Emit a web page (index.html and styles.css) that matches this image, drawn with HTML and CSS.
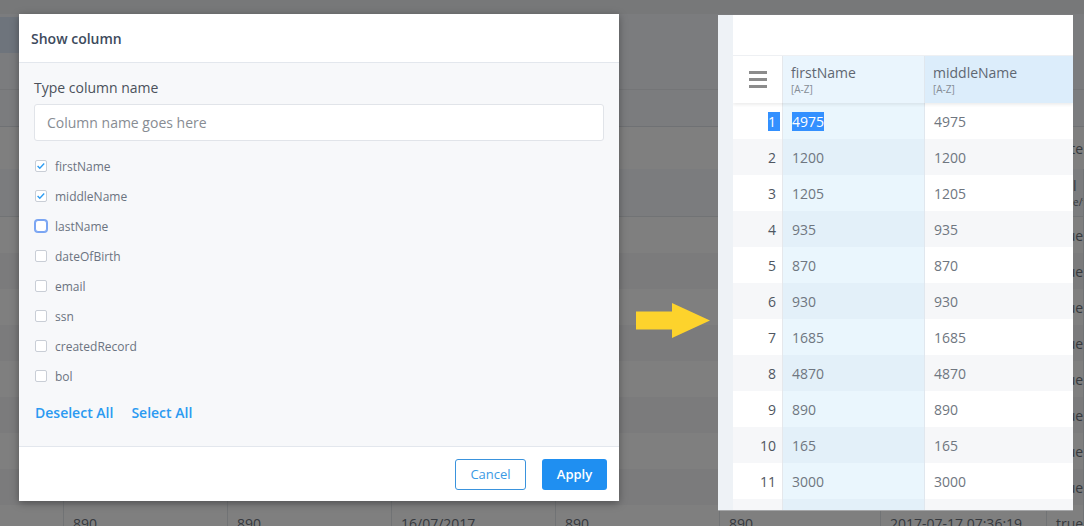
FILE: index.html
```html
<!DOCTYPE html>
<html lang="en">
<head>
    <meta charset="UTF-8">
    <meta name="viewport" content="width=device-width, initial-scale=1.0">
    <title>Show column</title>
    <link rel="stylesheet" href="styles.css">
</head>
<body>

    <!-- grid page behind the modal (only the parts that peek out carry text) -->
    <div class="app">
        <div class="app-top"></div>
        <div class="app-bar"><div class="app-tab"></div></div>
        <div class="app-pad"></div>
        <div class="app-pad app-pad-line"></div>
        <div class="app-row app-filter">
            <span></span><span></span><span></span><span></span><span></span><span></span><span></span><span>Filter</span>
        </div>
        <div class="app-row app-head">
            <span></span><span></span><span></span><span></span><span></span><span></span><span></span>
            <span>bol<small>[true/false]</small></span>
        </div>
        <div class="app-row"><span></span><span></span><span></span><span></span><span></span><span></span><span></span><span>true</span></div>
        <div class="app-row alt"><span></span><span></span><span></span><span></span><span></span><span></span><span></span><span>true</span></div>
        <div class="app-row"><span></span><span></span><span></span><span></span><span></span><span></span><span></span><span>true</span></div>
        <div class="app-row alt"><span></span><span></span><span></span><span></span><span></span><span></span><span></span><span>true</span></div>
        <div class="app-row"><span></span><span></span><span></span><span></span><span></span><span></span><span></span><span>true</span></div>
        <div class="app-row alt"><span></span><span></span><span></span><span></span><span></span><span></span><span></span><span>true</span></div>
        <div class="app-row"><span></span><span></span><span></span><span></span><span></span><span></span><span></span><span>true</span></div>
        <div class="app-row alt"><span></span><span></span><span></span><span></span><span></span><span></span><span></span><span>true</span></div>
        <div class="app-row"><span></span><span>890</span><span>890</span><span>16/07/2017</span><span>890</span><span>890</span><span>2017-07-17 07:36:19</span><span>true</span></div>
    </div>

    <div class="overlay"></div>

    <div class="stage">
        <div class="dialog">
            <div class="dialog-head">Show column</div>
            <div class="dialog-body">
                <div class="field-label">Type column name</div>
                <input class="field-input" type="text" placeholder="Column name goes here">

                <ul class="col-list">
                    <li><span class="box"><svg width="10" height="10" viewBox="0 0 10 10"><polyline points="1.6,5 3.8,7.2 8.2,2.6" /></svg></span>firstName</li>
                    <li><span class="box"><svg width="10" height="10" viewBox="0 0 10 10"><polyline points="1.6,5 3.8,7.2 8.2,2.6" /></svg></span>middleName</li>
                    <li><span class="box box-focus"></span>lastName</li>
                    <li><span class="box"></span>dateOfBirth</li>
                    <li><span class="box"></span>email</li>
                    <li><span class="box"></span>ssn</li>
                    <li><span class="box"></span>createdRecord</li>
                    <li><span class="box"></span>bol</li>
                </ul>

                <div class="bulk">
                    <a>Deselect All</a>
                    <a>Select All</a>
                </div>
            </div>
            <div class="dialog-foot">
                <button class="btn btn-cancel">Cancel</button>
                <button class="btn btn-apply">Apply</button>
            </div>
        </div>

        <svg class="arrow" width="74" height="35" viewBox="0 0 74 35">
            <polygon points="0,8.5 36,8.5 36,0 74,17.5 36,35 36,26.5 0,26.5" />
        </svg>

        <div class="shot">
            <div class="shot-side"></div>
            <div class="shot-main">
                <div class="shot-top"></div>
                <div class="grid-head">
                    <div class="c-num">
                        <svg width="18" height="17" viewBox="0 0 18 17">
                            <rect x="0" y="0" width="18" height="3" />
                            <rect x="0" y="7" width="18" height="3" />
                            <rect x="0" y="14" width="18" height="3" />
                        </svg>
                    </div>
                    <div class="c-first">firstName<small>[A-Z]</small></div>
                    <div class="c-mid">middleName<small>[A-Z]</small></div>
                </div>
                <div class="g-row"><div class="c-num"><span class="sel sel-num">1</span></div><div class="c-first"><span class="sel">4975</span></div><div class="c-mid">4975</div></div>
                <div class="g-row alt"><div class="c-num">2</div><div class="c-first">1200</div><div class="c-mid">1200</div></div>
                <div class="g-row"><div class="c-num">3</div><div class="c-first">1205</div><div class="c-mid">1205</div></div>
                <div class="g-row alt"><div class="c-num">4</div><div class="c-first">935</div><div class="c-mid">935</div></div>
                <div class="g-row"><div class="c-num">5</div><div class="c-first">870</div><div class="c-mid">870</div></div>
                <div class="g-row alt"><div class="c-num">6</div><div class="c-first">930</div><div class="c-mid">930</div></div>
                <div class="g-row"><div class="c-num">7</div><div class="c-first">1685</div><div class="c-mid">1685</div></div>
                <div class="g-row alt"><div class="c-num">8</div><div class="c-first">4870</div><div class="c-mid">4870</div></div>
                <div class="g-row"><div class="c-num">9</div><div class="c-first">890</div><div class="c-mid">890</div></div>
                <div class="g-row alt"><div class="c-num">10</div><div class="c-first">165</div><div class="c-mid">165</div></div>
                <div class="g-row"><div class="c-num">11</div><div class="c-first">3000</div><div class="c-mid">3000</div></div>
                <div class="g-row alt"><div class="c-num"></div><div class="c-first"></div><div class="c-mid"></div></div>
            </div>
        </div>
    </div>

</body>
</html>
```

FILE: styles.css
```css
* {
    box-sizing: border-box;
}
body {
    margin: 0;
    width: 1084px;
    height: 526px;
    overflow: hidden;
    position: relative;
    background: #fff;
    font-family: "Open Sans", "Noto Sans", Arial, sans-serif;
}

/* background page */
.app-top {
    height: 14px;
    background: #eef0f2;
}
.app-bar {
    height: 39px;
    padding-top: 3px;
    background: #f6f8fc;
}
.app-tab {
    width: 64px;
    height: 36px;
    background: #dce9f9;
}
.app-pad {
    height: 36px;
    background: #f6f8fc;
}
.app-pad-line {
    height: 38px;
    border-top: 1px solid #e8ebef;
    border-bottom: 1px solid #dfe3e8;
}
.app-row {
    display: grid;
    grid-template-columns: 64px 164px 164px 164px 164px 161px 166px 1fr;
    height: 36px;
    font-size: 14px;
    color: #6c737d;
    background: #fff;
}
.app-row.alt {
    background: #f6f7f9;
}
.app-row span {
    display: flex;
    align-items: center;
    padding: 0 9px;
    white-space: nowrap;
    overflow: hidden;
    border-right: 1px solid #e2e6ea;
}
.app-filter {
    height: 42px;
}
.app-filter span {
    border-right: none;
}
.app-head {
    height: 48px;
    background: #f6f8fc;
    border-bottom: 1px solid #e2e6ea;
}
.app-head span {
    flex-direction: column;
    align-items: flex-start;
    justify-content: center;
    line-height: 18px;
}
.app-head small {
    font-size: 10px;
    line-height: 14px;
}

.overlay {
    position: absolute;
    inset: 0;
    background: rgba(0, 0, 0, 0.5);
}

.stage {
    position: absolute;
    inset: 0;
    display: flex;
    align-items: flex-start;
    padding: 14px 0 0 19px;
}

/* modal */
.dialog {
    width: 600px;
    height: 487px;
    display: flex;
    flex-direction: column;
    background: #fff;
    box-shadow: 0 2px 8px rgba(0, 0, 0, 0.35);
}
.dialog-head {
    height: 49px;
    display: flex;
    align-items: center;
    padding: 0 12px;
    border-bottom: 1px solid #e3e7ed;
    font-size: 14px;
    font-weight: 600;
    color: #3d4a5c;
}
.dialog-body {
    flex: 1;
    padding: 15px 15px 0;
    background: #f7f8fa;
    border-bottom: 1px solid #e3e7ed;
}
.field-label {
    font-size: 14px;
    line-height: 20px;
    color: #4b515a;
    margin-bottom: 6px;
}
.field-input {
    display: block;
    width: 100%;
    height: 37px;
    padding: 0 12px;
    border: 1px solid #e1e4e9;
    border-radius: 3px;
    background: #fff;
    font-family: inherit;
    font-size: 14px;
    color: #4b515a;
    outline: none;
}
.field-input::placeholder {
    color: #878c93;
}
.col-list {
    list-style: none;
    margin: 10px 0 0;
    padding: 0;
}
.col-list li {
    height: 30px;
    display: flex;
    align-items: center;
    gap: 8px;
    font-size: 12px;
    color: #6b7380;
}
.box {
    width: 12px;
    height: 12px;
    margin-left: 1px;
    display: flex;
    align-items: center;
    justify-content: center;
    border: 1px solid #c9ced6;
    border-radius: 2px;
    background: #fff;
}
.box svg polyline {
    fill: none;
    stroke: #2d9cf2;
    stroke-width: 1.4;
}
.box-focus {
    border-color: #7aa5f3;
    border-radius: 3px;
    box-shadow: 0 0 0 1px #7aa5f3;
}
.bulk {
    display: flex;
    gap: 18px;
    margin: 12px 0 0 1px;
}
.bulk a {
    font-size: 14px;
    line-height: 20px;
    font-weight: 600;
    color: #2b9af1;
    cursor: pointer;
}
.dialog-foot {
    height: 54px;
    display: flex;
    align-items: center;
    justify-content: flex-end;
    gap: 16px;
    padding-right: 12px;
}
.btn {
    height: 31px;
    border-radius: 3px;
    font-family: inherit;
    font-size: 13px;
    cursor: pointer;
}
.btn-cancel {
    width: 71px;
    border: 1px solid #3a93dd;
    background: #fff;
    color: #3a99e4;
}
.btn-apply {
    width: 65px;
    border: none;
    background: #1f8ff1;
    color: #fff;
    font-weight: 600;
}

.arrow {
    margin: 289px 0 0 17px;
    fill: #fdd32c;
}

/* grid snapshot */
.shot {
    width: 355px;
    height: 496px;
    margin: 1px 0 0 8px;
    display: flex;
    overflow: hidden;
    background: #fff;
    border-bottom: 1px solid #a5a6a8;
}
.shot-side {
    width: 15px;
    background: #eef2f6;
}
.shot-main {
    flex: 1;
    overflow: hidden;
}
.shot-top {
    height: 40px;
}
.grid-head {
    height: 48px;
    display: flex;
    border-top: 1px solid #eef0f3;
    box-shadow: 0 2px 3px rgba(0, 0, 0, 0.07);
    position: relative;
    z-index: 1;
    font-size: 14px;
    line-height: 19px;
    color: #5f6772;
}
.grid-head .c-num {
    justify-content: center;
    padding: 0;
    background: #fff;
}
.grid-head .c-num svg {
    fill: #8c8c8c;
}
.grid-head .c-first,
.grid-head .c-mid {
    flex-direction: column;
    align-items: flex-start;
    justify-content: flex-start;
    padding: 7px 0 0 8px;
}
.grid-head .c-first {
    background: #eaf5fd;
}
.grid-head .c-mid {
    background: #dcedfb;
}
.grid-head small {
    font-size: 10px;
    line-height: 15px;
    color: #858c95;
}
.c-num {
    width: 50px;
    display: flex;
    align-items: center;
    justify-content: flex-end;
    padding-right: 6px;
    border-right: 1px solid #e5e8ec;
    color: #4f5661;
}
.c-first {
    width: 142px;
    display: flex;
    align-items: center;
    padding-left: 9px;
    border-right: 1px solid #e0e7ee;
}
.c-mid {
    flex: 1;
    display: flex;
    align-items: center;
    padding-left: 9px;
}
.g-row {
    height: 36px;
    display: flex;
    font-size: 14px;
    line-height: 19px;
    color: #6f7680;
    background: #fff;
}
.g-row.alt {
    background: #f6f7f9;
}
.g-row .c-first {
    background: #eaf6fd;
}
.g-row.alt .c-first {
    background: #e3f0f9;
}
.sel {
    background: #3390ff;
    color: #fff;
}
.sel-num {
    padding-right: 4px;
    margin-right: -4px;
}
```
